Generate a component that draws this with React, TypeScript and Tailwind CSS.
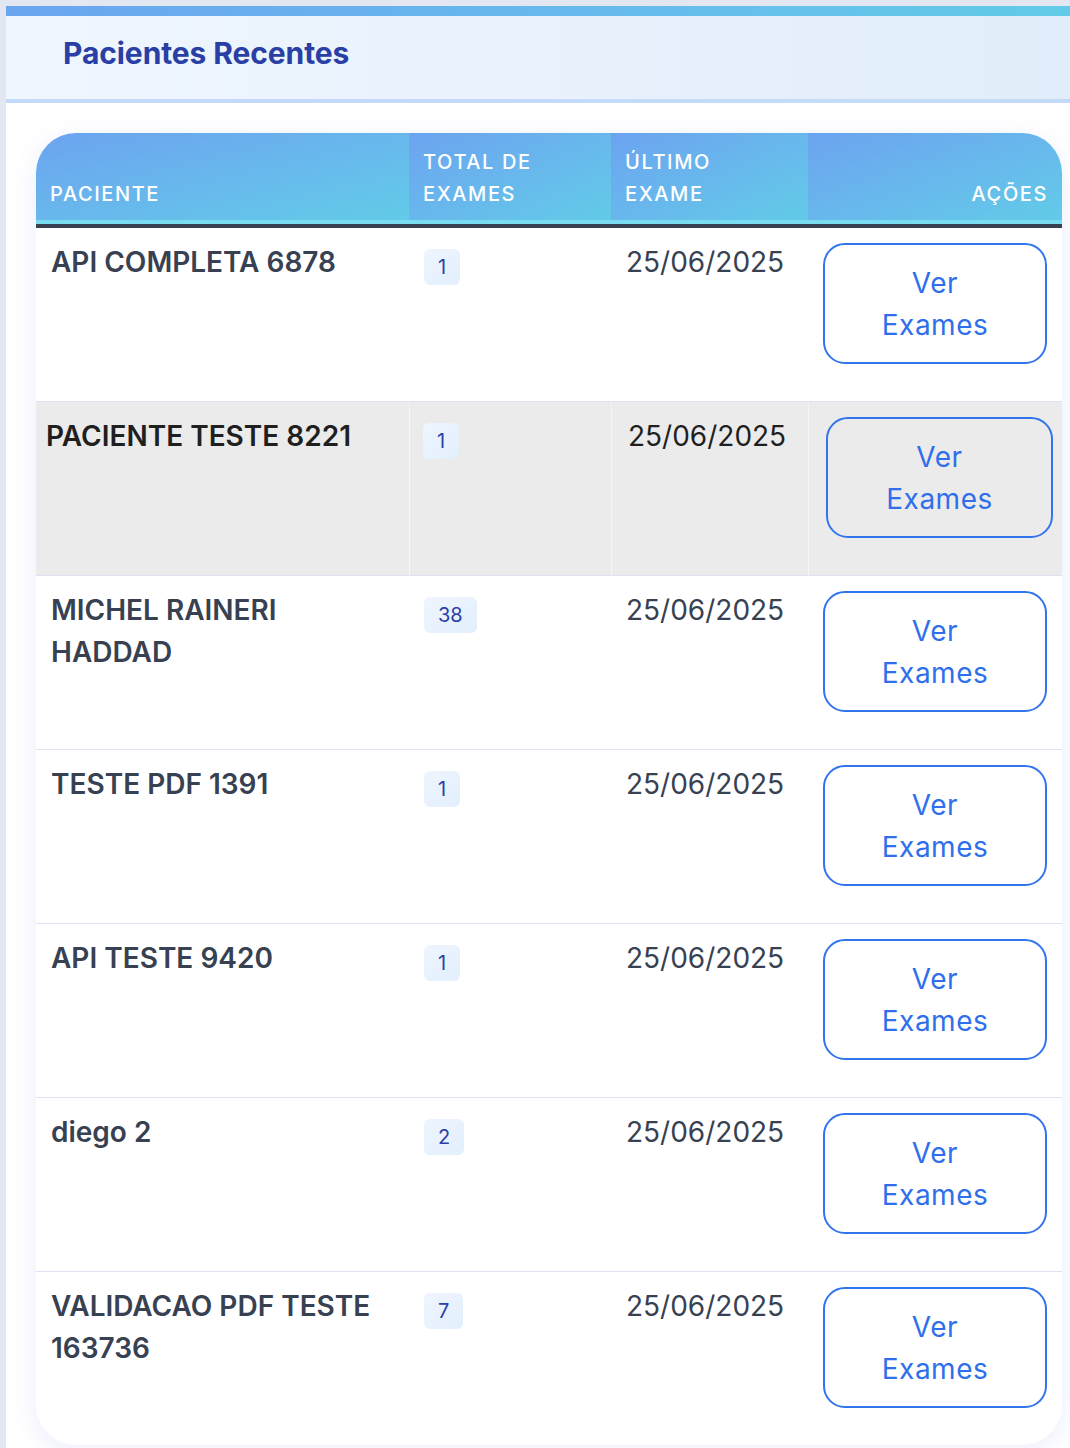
import React from 'react';

const patients = [
  { name: 'API COMPLETA 6878', total: 1, date: '25/06/2025' },
  { name: 'PACIENTE TESTE 8221', total: 1, date: '25/06/2025' },
  { name: 'MICHEL RAINERI HADDAD', total: 38, date: '25/06/2025' },
  { name: 'TESTE PDF 1391', total: 1, date: '25/06/2025' },
  { name: 'API TESTE 9420', total: 1, date: '25/06/2025' },
  { name: 'diego 2', total: 2, date: '25/06/2025' },
  { name: 'VALIDACAO PDF TESTE 163736', total: 7, date: '25/06/2025' },
];

// row with the mouse over it in the screenshot
const HOVER = 1;

export default function App() {
  return (
    <div className="min-h-screen bg-[#e2e7f2] pt-[6px] pl-[6px] font-['Inter','Noto_Sans',sans-serif]">
      <div className="bg-white w-[1064px] min-h-[1442px]">
        {/* top accent bar */}
        <div className="h-[10px] bg-gradient-to-r from-[#6aa5f0] to-[#63cbe8]" />

        {/* card header */}
        <div className="h-[87px] flex items-center pl-[57px] pb-[8px] bg-gradient-to-r from-[#eff6fe] to-[#e2edfb] border-b-4 border-[#c3dbf9]">
          <h2 className="text-[30px] font-bold text-[#2a3fa5] tracking-[-0.1px]">Pacientes Recentes</h2>
        </div>

        <div className="pt-[30px] pl-[30px] pr-[8px]">
          <div className="rounded-[40px] overflow-hidden bg-white shadow-[0_6px_24px_rgba(99,112,241,0.12)]">
            <table className="w-full table-fixed border-separate border-spacing-0">
              <colgroup>
                <col className="w-[373px]" />
                <col className="w-[202px]" />
                <col className="w-[197px]" />
                <col className="w-[254px]" />
              </colgroup>
              <thead>
                <tr>
                  {['Paciente', 'Total de Exames', 'Último Exame', 'Ações'].map((h, i) => (
                    <th
                      key={h}
                      className={
                        'align-bottom px-[14px] pt-[13px] pb-[10px] text-[20px] leading-[32px] font-medium uppercase tracking-[1.6px] text-white bg-gradient-to-br from-[#6ca3f0] to-[#62cbe8] border-b-4 border-[#7adcf0] ' +
                        (i === 3 ? 'text-right' : 'text-left')
                      }
                    >
                      {h}
                    </th>
                  ))}
                </tr>
              </thead>
              <tbody>
                {patients.map((p, idx) => {
                  const hover = idx === HOVER;
                  const top = idx === 0 ? 'border-t-4 border-t-[#374151]' : '';
                  const bottom = idx < patients.length - 1 ? 'border-b border-b-[#dde1f1]' : '';
                  const cell = `align-top ${top} ${bottom} ${hover ? 'bg-[#ebebeb]' : 'bg-white'}`;
                  const sep = hover ? 'border-l border-l-[#f5f5f5]' : '';
                  return (
                    <tr key={p.name}>
                      <td className={`${cell} ${hover ? 'pl-[10px]' : 'pl-[15px]'} pr-[15px] pt-[13px]`}>
                        <span className={`text-[28px] leading-[42px] font-semibold ${hover ? 'text-[#1f1f1f]' : 'text-[#374151]'}`}>
                          {p.name}
                        </span>
                      </td>
                      <td className={`${cell} ${sep} ${hover ? 'pl-[13px]' : 'pl-[15px]'} pt-[21px]`}>
                        <span className="inline-block rounded-md px-[14px] py-1 text-[20px] leading-[28px] text-[#2b40a8] bg-gradient-to-br from-[#eef5fe] to-[#e3effd]">
                          {p.total}
                        </span>
                      </td>
                      <td className={`${cell} ${sep} ${hover ? 'pl-[16px]' : 'pl-[15px]'} pt-[13px]`}>
                        <span className={`text-[28px] leading-[42px] ${hover ? 'text-[#1f1f1f]' : 'text-[#374151]'}`}>
                          {p.date}
                        </span>
                      </td>
                      <td className={`${cell} ${sep} ${hover ? 'pl-[17px] pr-[9px]' : 'px-[15px]'} pt-[15px] pb-[37px]`}>
                        <button className="w-full rounded-[22px] border-2 border-[#3273ee] px-10 py-[16.5px] text-[28px] leading-[42px] tracking-[0.5px] text-[#2f6fec] text-center bg-transparent">
                          Ver Exames
                        </button>
                      </td>
                    </tr>
                  );
                })}
              </tbody>
            </table>
          </div>
        </div>
      </div>
    </div>
  );
}
